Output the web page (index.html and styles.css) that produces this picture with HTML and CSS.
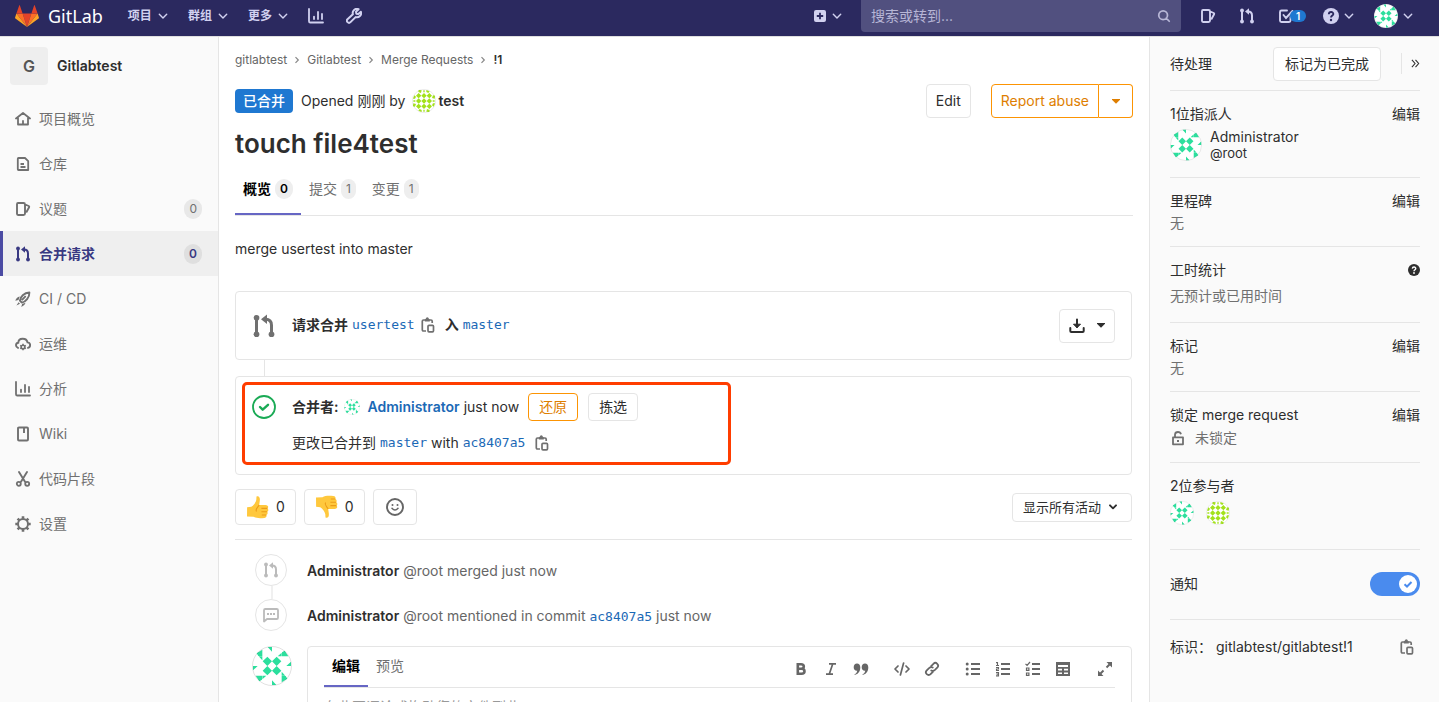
FILE: index.html
```html
<!DOCTYPE html>
<html lang="zh-CN">
<head>
<meta charset="utf-8">
<meta name="viewport" content="width=device-width, initial-scale=1">
<title>touch file4test (!1) · Merge Requests · Gitlabtest · GitLab</title>
<link rel="stylesheet" href="styles.css">
</head>
<body>
<svg class="sprite" aria-hidden="true">
  <symbol id="chevron" viewBox="0 0 10 10"><path d="M1.300 3.200L5 7l3.700-3.800" fill="none" stroke="currentColor" stroke-width="1.400" stroke-linecap="round" stroke-linejoin="round"/></symbol>
  <symbol id="chevron-bold" viewBox="0 0 8 8"><path d="M1 2.300l3 3 3-3" fill="none" stroke="currentColor" stroke-width="1.900" stroke-linecap="round" stroke-linejoin="round"/></symbol>
  <symbol id="angle" viewBox="0 0 8 8"><path d="M2.500 1.200L5.300 4 2.500 6.800" fill="none" stroke="currentColor" stroke-width="1.200"/></symbol>
  <symbol id="caret" viewBox="0 0 8 5"><path d="M0 0h8v.8L4 4.800 0 .8z" fill="currentColor"/></symbol>
  <symbol id="chart" viewBox="0 0 16 16"><path d="M1 1v12.200q0 1.300 1.300 1.300H15M6 11V8.600M10 11V4M14 11V6" fill="none" stroke="currentColor" stroke-width="1.800" stroke-linecap="round"/></symbol>
  <symbol id="wrench" viewBox="0 0 16 16"><path d="M12.600 1.200A4.200 4.200 0 0 0 6.900 6.300L1.500 11.200a1.900 1.900 0 0 0 3 2.900L9.600 9.100a4.200 4.200 0 0 0 5.300-5.300l-2.600 2.300-2-.4-.3-2z" fill="none" stroke="currentColor" stroke-width="2" stroke-linejoin="round"/></symbol>
  <symbol id="plus" viewBox="0 0 12 12"><path fill="currentColor" fill-rule="evenodd" d="M2 0h8q2 0 2 2v8q0 2-2 2H2q-2 0-2-2V2q0-2 2-2zm3.100 2.800v2.300H2.800v1.800h2.300v2.300h1.800V6.900h2.300V5.100H6.900V2.800z"/></symbol>
  <symbol id="search" viewBox="0 0 16 16"><path d="M10.500 10.500L14 14M12 7A5 5 0 1 1 2 7a5 5 0 0 1 10 0z" fill="none" stroke="currentColor" stroke-width="2" stroke-linecap="round"/></symbol>
  <symbol id="issues" viewBox="0 0 16 16"><path d="M3 2h5.500q1.500 0 1.500 1.500v9q0 1.500-1.500 1.500H3q-1 0-1-1.200V3.200Q2 2 3 2zM10.300 3.500l3.400 1.500q.8.500.4 1.300L11.200 11.500" fill="none" stroke="currentColor" stroke-width="1.900" stroke-linejoin="round"/></symbol>
  <symbol id="merge" viewBox="0 0 16 16"><path d="M3 3v10M13 13V7.500C13 5 11.500 3.500 9 3.500" fill="none" stroke="currentColor" stroke-width="2"/><g fill="currentColor"><circle cx="3" cy="2.500" r="1.900"/><circle cx="3" cy="13.500" r="1.900"/><circle cx="13" cy="13.500" r="1.900"/><path d="M10 .3v6.400L6 3.500z"/></g></symbol>
  <symbol id="todo" viewBox="0 0 16 16"><path d="M9 2.500H3.500Q2 2.500 2 4v8.500Q2 14 3.500 14H11q1.500 0 1.500-1.500V9M5.500 7l2.500 3 6.500-7" fill="none" stroke="currentColor" stroke-width="1.900" stroke-linecap="round"/></symbol>
  <symbol id="help" viewBox="0 0 16 16"><circle cx="8" cy="8" r="8" fill="currentColor"/><path class="help-mark" d="M5.800 6.200C6 3.200 10.500 3.400 10.300 6.200 10.200 7.500 8 7.800 8 9.500" fill="none" stroke-width="1.900"/><circle class="help-dot" cx="8" cy="12" r="1.200"/></symbol>
  <symbol id="home" viewBox="0 0 16 16"><path d="M1 7.500L8 2l7 5.500M3 7v6.500h10V7M8 10v3" fill="none" stroke="currentColor" stroke-width="1.800" stroke-linecap="round" stroke-linejoin="round"/></symbol>
  <symbol id="doc" viewBox="0 0 16 16"><path d="M3.500 2H10l3.200 3.200V14H3.500q-.7 0-.7-.8V2.800q0-.8.700-.8zM5.500 8H9M5.500 11h5" fill="none" stroke="currentColor" stroke-width="1.800" stroke-linejoin="round"/></symbol>
  <symbol id="rocket" viewBox="0 0 16 16"><path d="M6 10.800L4.900 9.700C5.300 6 9 1.700 14.400 1.500 14.600 6.400 10.600 11 6.900 11.600zM7.300 8.600l2.900-2.900" fill="none" stroke="currentColor" stroke-width="1.900" stroke-linejoin="round" stroke-linecap="round"/><path d="M.3 9.800Q1.200 6.300 4.800 5.500L3.500 9zM6.300 16q3.300-1 4.300-4.300l-3.500 1.200zM3.600 11.200l1.400 1.500-3.600 1.700z" fill="currentColor"/></symbol>
  <symbol id="cloud" viewBox="0 0 16 16"><path d="M3 11.900C.3 10.900.3 7.100 3.300 6.700 3.500 1.500 11.500 1.300 12.500 6.400c3.500.2 3.400 4.700.5 5.500" fill="none" stroke="currentColor" stroke-width="1.900" stroke-linecap="round"/><circle cx="8" cy="11" r="1.800" fill="none" stroke="currentColor" stroke-width="1.500"/><path d="M8 7.700v1.500M8 12.800v1.500M5.200 9.300l1.200.8M9.600 11.900l1.200.8M5.200 12.700l1.200-.8M9.600 10.100l1.200-.8" stroke="currentColor" stroke-width="1.500"/></symbol>
  <symbol id="book" viewBox="0 0 16 16"><path d="M4 1.500h8q1 0 1 1v11q0 1-1 1H4q-1 0-1-1v-11q0-1 1-1zM9 2v5" fill="none" stroke="currentColor" stroke-width="1.900"/></symbol>
  <symbol id="scissors" viewBox="0 0 16 16"><path d="M4 1l6 9.700M12 1L6 10.700" stroke="currentColor" stroke-width="1.900" stroke-linecap="round"/><g fill="none" stroke="currentColor" stroke-width="1.800"><circle cx="3.800" cy="12.800" r="2"/><circle cx="12.200" cy="12.800" r="2"/></g></symbol>
  <symbol id="gear" viewBox="0 0 16 16"><circle cx="8" cy="8" r="5" fill="none" stroke="currentColor" stroke-width="2"/><path d="M8 .3v2.500M8 13.200v2.500M.3 8h2.500M13.200 8h2.500M2.600 2.600l1.800 1.800M11.600 11.600l1.800 1.800M2.600 13.400l1.800-1.800M11.600 4.400l1.800-1.800" stroke="currentColor" stroke-width="2.600"/></symbol>
  <symbol id="copy" viewBox="0 0 16 16"><path d="M6 14H3.500Q2.300 14 2.300 12.800V4.200Q2.300 3 3.500 3H11q1.200 0 1.200 1.200V6" fill="none" stroke="currentColor" stroke-width="1.700"/><path d="M4.800 4.500V2.800Q4.800 2 5.600 2 6 .3 7.300.3T9 2q.8 0 .8.800v1.700z" fill="currentColor"/><rect x="8" y="8.300" width="5.500" height="6.500" rx="1" fill="none" stroke="currentColor" stroke-width="1.700"/></symbol>
  <symbol id="download" viewBox="0 0 16 16"><path d="M1.300 10v3q0 1 1 1h11.400q1 0 1-1v-3M8 1.500V9" fill="none" stroke="currentColor" stroke-width="2" stroke-linecap="round"/><path d="M4.500 6.200L8 9.800l3.500-3.600z" fill="currentColor" stroke="currentColor" stroke-width="1" stroke-linejoin="round"/></symbol>
  <symbol id="merged" viewBox="0 0 24 24"><circle cx="12" cy="12" r="11" fill="none" stroke="currentColor" stroke-width="1.800"/><path d="M8 12l2.700 2.700L16 9.800" fill="none" stroke="currentColor" stroke-width="2.400" stroke-linecap="round" stroke-linejoin="round"/></symbol>
  <symbol id="smile" viewBox="0 0 18 18"><circle cx="9" cy="9" r="8" fill="none" stroke="currentColor" stroke-width="1.900"/><circle cx="6.500" cy="7" r="1" fill="currentColor"/><circle cx="11.500" cy="7" r="1" fill="currentColor"/><path d="M6 10.300q3 3.600 6 0" fill="none" stroke="currentColor" stroke-width="1.500" stroke-linecap="round"/></symbol>
  <symbol id="comment" viewBox="0 0 16 16"><path d="M1 14.500V3.300Q1 2 2.300 2h11.400Q15 2 15 3.300v7.400q0 1.300-1.300 1.300H4z" fill="none" stroke="currentColor" stroke-width="1.800" stroke-linejoin="round"/><path d="M4 6h2v2H4zM7 6h2v2H7zM10 6h2v2h-2z" fill="currentColor"/></symbol>
  <symbol id="bold" viewBox="0 0 16 16"><path fill="none" stroke="currentColor" stroke-width="2.600" d="M4.800 3.300H8q2.800 0 2.800 2.200T8 7.700H4.800zM4.800 7.700h3.700q3 0 3 2.500t-3 2.500H4.800z"/></symbol>
  <symbol id="italic" viewBox="0 0 16 16"><path fill="none" stroke="currentColor" stroke-width="1.700" d="M6 2.800h7M3 13.200h7M9.700 3L6.300 13"/></symbol>
  <symbol id="quote" viewBox="0 0 16 16"><path fill="currentColor" d="M1 14q3-1.500 3.300-4.300C2 9.900.7 8.500.7 6.300.7 4 2 2.500 4 2.500S7.300 4 7.300 6.500C7.300 11 4.500 13.600 1 14zM9 14q3-1.500 3.300-4.300C10 9.900 8.700 8.500 8.700 6.300c0-2.300 1.300-3.800 3.300-3.800s3.300 1.500 3.300 4C15.300 11 12.500 13.600 9 14z"/></symbol>
  <symbol id="code" viewBox="0 0 16 16"><path fill="none" stroke="currentColor" stroke-width="1.700" stroke-linecap="round" stroke-linejoin="round" d="M4 5L1 8l3 3M12 5l3 3-3 3M9.600 2L6.400 14"/></symbol>
  <symbol id="link" viewBox="0 0 16 16"><g transform="rotate(-45 8 8)" fill="none" stroke="currentColor" stroke-width="1.800" stroke-linecap="round"><path d="M6.500 10.700H3.300a2.700 2.700 0 0 1 0-5.400h3.200q2.500.2 3 2.200"/><path d="M9.500 5.300h3.200a2.700 2.700 0 0 1 0 5.400H9.500q-2.500-.2-3-2.200"/></g></symbol>
  <symbol id="ul" viewBox="0 0 16 16"><path stroke="currentColor" stroke-width="1.900" d="M6 3h9M6 8h9M6 13h9"/><g fill="currentColor"><circle cx="2.200" cy="3" r="1.500"/><circle cx="2.200" cy="8" r="1.500"/><circle cx="2.200" cy="13" r="1.500"/></g></symbol>
  <symbol id="ol" viewBox="0 0 16 16"><path stroke="currentColor" stroke-width="1.900" d="M6 3h9M6 8h9M6 13h9"/><path fill="none" stroke="currentColor" stroke-width="1.100" d="M1 1.600h1.500v2.800M1 4.500h3M1 6.500h2.500V8H1.500v1.500H4M1 11.600h2.500v3.300H1M1.500 13.200h2"/></symbol>
  <symbol id="tasks" viewBox="0 0 16 16"><path stroke="currentColor" stroke-width="1.900" d="M7 3h8M7 8h8M7 13h8"/><path fill="none" stroke="currentColor" stroke-width="1.200" d="M.5 2.800l1.600 1.600L5 1M1.500 7h2.400v2.400H1.500zM1.500 12h2.400v2.400H1.500z"/></symbol>
  <symbol id="table" viewBox="0 0 16 16"><path fill="currentColor" fill-rule="evenodd" d="M1 1h14v14H1zM3 4v2h10V4zM3 7.800v1.700h4V7.800zm6 0v1.700h4V7.800zM3 11.500V13h4v-1.500zm6 0V13h4v-1.500z"/></symbol>
  <symbol id="expand" viewBox="0 0 16 16"><path d="M9.500 6.500l3-3M6.500 9.500l-3 3" stroke="currentColor" stroke-width="1.900"/><path fill="currentColor" d="M9.500 1H15v5.500zM1 9.500V15h5.500z"/></symbol>
  <symbol id="lock" viewBox="0 0 16 16"><path d="M3 7.300h10v7H3zM5 7V4.500q.3-2.500 3-2.500 2 0 2.800 1.500" fill="none" stroke="currentColor" stroke-width="1.800" stroke-linecap="round" stroke-linejoin="round"/><rect x="7" y="10" width="2" height="2" fill="currentColor"/></symbol>
  <symbol id="thumb-up" viewBox="0 0 24 24"><path fill="#ffc83d" d="M10.500 1.500c2.400-.9 3.700 1 3.300 4.200l-.6 4.300h6.300c3 0 3.300 2.600 1.900 3.400 1.500 1 1.100 3-.3 3.400 1.100 1 .5 2.900-.8 3.200.7 1.600-.3 2.800-2 2.900-4.200.4-8.100.4-10.800-1.100L1 21.400l.1-9.200 4.200-.5c2.600-1.600 4.600-4.500 5-7z"/><path fill="none" stroke="#ec9c18" stroke-width="1.100" d="M21.400 13.400h-6M21.100 16.800h-5.700M20.300 20h-4.500M13.200 10l-1.700 2.400q-2 2.200-1 4"/></symbol>
  <symbol id="avatar-admin" viewBox="0 0 120 120"><circle cx="60" cy="60" r="60" fill="#fff"/><g fill="#2bdf9d"><path d="M46 32l14 14-14 14-14-14zM74 32l14 14-14 14-14-14zM46 60l14 14-14 14-14-14zM74 60l14 14-14 14-14-14z"/><g id="pinwheel"><path d="M47 3h13v14zM77 31l12-11v11zM90 31V19l8-5 11 17z"/></g><use href="#pinwheel" transform="rotate(90 60 60)"/><use href="#pinwheel" transform="rotate(180 60 60)"/><use href="#pinwheel" transform="rotate(270 60 60)"/></g><circle cx="60" cy="60" r="58.500" fill="none" stroke="#000" stroke-opacity=".12" stroke-width="3"/></symbol>
  <symbol id="avatar-test" viewBox="0 0 72 72"><circle cx="36" cy="36" r="36" fill="#fff"/><g fill="#a3e21b"><path d="M36 28l8 8-8 8-8-8z"/><g id="blocks"><path d="M36 12l8 8-8 8-8-8zM52 12l8 8-8 8-8-8zM20 3l9 1-2 8-8-3zM43 3l10 4-4 5-6-3zM34 4h4v6h-4z"/></g><use href="#blocks" transform="rotate(90 36 36)"/><use href="#blocks" transform="rotate(180 36 36)"/><use href="#blocks" transform="rotate(270 36 36)"/></g><circle cx="36" cy="36" r="35" fill="none" stroke="#000" stroke-opacity=".12" stroke-width="2"/></symbol>
</svg>

<header class="navbar">
  <a class="brand" href="#">
    <svg class="brand-logo" viewBox="0 0 24 22"><path fill="#e24329" d="M12 22L7.600 8.500h8.800z"/><path fill="#fc6d26" d="M12 22L7.600 8.500H1.400zM12 22l4.400-13.500h6.200z"/><path fill="#fca326" d="M1.400 8.500L.1 12.600q-.2.600.3 1L12 22zM22.600 8.500l1.300 4.100q.2.600-.3 1L12 22z"/><path fill="#e24329" d="M1.400 8.500h6.200L4.900.4q-.3-.7-.7 0zM22.600 8.500h-6.200L19.100.4q.3-.7.700 0z"/></svg>
    <span class="brand-name">GitLab</span>
  </a>
  <nav class="top-nav" aria-label="主导航">
    <button class="top-link">项目<svg class="chev"><use href="#chevron"/></svg></button>
    <button class="top-link">群组<svg class="chev"><use href="#chevron"/></svg></button>
    <button class="top-link">更多<svg class="chev"><use href="#chevron"/></svg></button>
    <a class="top-icon" href="#" aria-label="分析"><svg class="icon"><use href="#chart"/></svg></a>
    <a class="top-icon" href="#" aria-label="管理"><svg class="icon"><use href="#wrench"/></svg></a>
  </nav>
  <div class="top-right">
    <button class="top-new" aria-label="新建"><svg class="icon-sm"><use href="#plus"/></svg><svg class="chev"><use href="#chevron"/></svg></button>
    <label class="search"><input class="search-input" type="text" placeholder="搜索或转到..." aria-label="搜索或转到"><svg class="search-icon"><use href="#search"/></svg></label>
    <a class="top-item" href="#" aria-label="议题"><svg class="icon"><use href="#issues"/></svg></a>
    <a class="top-item" href="#" aria-label="合并请求"><svg class="icon"><use href="#merge"/></svg></a>
    <a class="top-item todos" href="#" aria-label="待办事项"><svg class="icon"><use href="#todo"/></svg><span class="todo-count">1</span></a>
    <button class="top-item" aria-label="帮助"><svg class="icon help-top"><use href="#help"/></svg><svg class="chev"><use href="#chevron"/></svg></button>
    <button class="top-item" aria-label="用户"><svg class="avatar-24"><use href="#avatar-admin"/></svg><svg class="chev"><use href="#chevron"/></svg></button>
  </div>
</header>

<div class="layout">
  <aside class="sidebar">
    <a class="project" href="#"><span class="project-avatar">G</span><span class="project-name">Gitlabtest</span></a>
    <nav class="side-nav" aria-label="项目导航">
      <a class="side-link" href="#"><svg class="icon"><use href="#home"/></svg><span>项目概览</span></a>
      <a class="side-link" href="#"><svg class="icon"><use href="#doc"/></svg><span>仓库</span></a>
      <a class="side-link" href="#"><svg class="icon"><use href="#issues"/></svg><span>议题</span><span class="count side-count">0</span></a>
      <a class="side-link active" href="#"><svg class="icon"><use href="#merge"/></svg><span>合并请求</span><span class="count side-count">0</span></a>
      <a class="side-link" href="#"><svg class="icon"><use href="#rocket"/></svg><span>CI / CD</span></a>
      <a class="side-link" href="#"><svg class="icon"><use href="#cloud"/></svg><span>运维</span></a>
      <a class="side-link" href="#"><svg class="icon"><use href="#chart"/></svg><span>分析</span></a>
      <a class="side-link" href="#"><svg class="icon"><use href="#book"/></svg><span>Wiki</span></a>
      <a class="side-link" href="#"><svg class="icon"><use href="#scissors"/></svg><span>代码片段</span></a>
      <a class="side-link" href="#"><svg class="icon"><use href="#gear"/></svg><span>设置</span></a>
    </nav>
  </aside>

  <main class="content">
    <nav class="breadcrumbs" aria-label="面包屑">
      <a href="#">gitlabtest</a><svg class="sep"><use href="#angle"/></svg><a href="#">Gitlabtest</a><svg class="sep"><use href="#angle"/></svg><a href="#">Merge Requests</a><svg class="sep"><use href="#angle"/></svg><a class="current" href="#">!1</a>
    </nav>
    <div class="detail-header">
      <span class="status">已合并</span>
      <span class="opened">Opened 刚刚 by</span>
      <a class="author" href="#"><svg class="avatar-24"><use href="#avatar-test"/></svg>test</a>
      <div class="header-actions">
        <button class="btn">Edit</button>
        <div class="btn-group"><button class="btn warn">Report abuse</button><button class="btn warn toggle" aria-label="更多操作"><svg class="caret"><use href="#caret"/></svg></button></div>
      </div>
    </div>
    <h1 class="title">touch file4test</h1>
    <nav class="tabs" aria-label="合并请求标签">
      <a class="tab active" href="#">概览<span class="count">0</span></a>
      <a class="tab" href="#">提交<span class="count">1</span></a>
      <a class="tab" href="#">变更<span class="count">1</span></a>
    </nav>
    <p class="description">merge usertest into master</p>

    <section class="widget source">
      <svg class="widget-icon"><use href="#merge"/></svg>
      <p class="widget-line"><strong>请求合并</strong><a class="ref" href="#">usertest</a><button class="copy" aria-label="复制分支名"><svg class="icon"><use href="#copy"/></svg></button><strong>入</strong><a class="ref" href="#">master</a></p>
      <button class="btn download" aria-label="下载"><svg class="icon"><use href="#download"/></svg><svg class="caret"><use href="#caret"/></svg></button>
    </section>
    <div class="connector"></div>
    <section class="widget result">
      <div class="highlight"></div>
      <svg class="widget-icon success"><use href="#merged"/></svg>
      <div class="result-body">
        <div class="merged-by"><strong>合并者:</strong><svg class="avatar-16"><use href="#avatar-admin"/></svg><a class="person" href="#">Administrator</a><span>just now</span><button class="btn small warn revert">还原</button><button class="btn small">拣选</button></div>
        <p class="widget-line"><span>更改已合并到</span><a class="ref" href="#">master</a><span>with</span><a class="ref" href="#">ac8407a5</a><button class="copy" aria-label="复制提交"><svg class="icon"><use href="#copy"/></svg></button></p>
      </div>
    </section>

    <div class="awards">
      <button class="btn award"><svg class="emoji"><use href="#thumb-up"/></svg>0</button>
      <button class="btn award"><svg class="emoji down"><use href="#thumb-up"/></svg>0</button>
      <button class="btn award add" aria-label="添加表情"><svg class="smile"><use href="#smile"/></svg></button>
      <button class="btn filter">显示所有活动<svg class="chev-bold"><use href="#chevron-bold"/></svg></button>
    </div>

    <ul class="notes">
      <li class="note"><span class="note-icon"><svg class="icon"><use href="#merge"/></svg></span><p><a class="note-author" href="#">Administrator</a> @root merged just now</p></li>
      <li class="note"><span class="note-icon"><svg class="icon"><use href="#comment"/></svg></span><p><a class="note-author" href="#">Administrator</a> @root mentioned in commit <a class="ref" href="#">ac8407a5</a> just now</p></li>
    </ul>

    <form class="comment">
      <svg class="avatar-40"><use href="#avatar-admin"/></svg>
      <div class="editor">
        <div class="editor-bar">
          <button type="button" class="editor-tab active">编辑</button><button type="button" class="editor-tab">预览</button>
          <div class="tools">
            <button type="button" aria-label="粗体"><svg class="icon"><use href="#bold"/></svg></button>
            <button type="button" aria-label="斜体"><svg class="icon"><use href="#italic"/></svg></button>
            <button type="button" aria-label="引用"><svg class="icon"><use href="#quote"/></svg></button>
            <button type="button" class="group" aria-label="代码"><svg class="icon"><use href="#code"/></svg></button>
            <button type="button" aria-label="链接"><svg class="icon"><use href="#link"/></svg></button>
            <button type="button" class="group" aria-label="无序列表"><svg class="icon"><use href="#ul"/></svg></button>
            <button type="button" aria-label="有序列表"><svg class="icon"><use href="#ol"/></svg></button>
            <button type="button" aria-label="任务列表"><svg class="icon"><use href="#tasks"/></svg></button>
            <button type="button" aria-label="表格"><svg class="icon"><use href="#table"/></svg></button>
            <button type="button" class="group" aria-label="全屏"><svg class="icon"><use href="#expand"/></svg></button>
          </div>
        </div>
        <textarea class="editor-text" aria-label="评论" placeholder="在此写评论或拖动您的文件到此"></textarea>
      </div>
    </form>
  </main>

  <aside class="details">
    <div class="block todo-block"><span>待处理</span><button class="btn mark">标记为已完成</button><button class="collapse" aria-label="收起侧边栏"><svg viewBox="0 0 10 10"><path d="M1 1l3.500 4L1 9M5 1l3.500 4L5 9" fill="none" stroke="currentColor" stroke-width="1.200"/></svg></button></div>
    <div class="block assignee"><div class="row"><span>1位指派人</span><a href="#">编辑</a></div>
      <a class="user" href="#"><svg class="avatar-32"><use href="#avatar-admin"/></svg><span class="user-text"><span>Administrator</span><span class="handle">@root</span></span></a></div>
    <div class="block"><div class="row"><span>里程碑</span><a href="#">编辑</a></div><div class="value">无</div></div>
    <div class="block time"><div class="row"><span>工时统计</span><button class="help-btn" aria-label="帮助"><svg class="icon-sm"><use href="#help"/></svg></button></div><div class="value">无预计或已用时间</div></div>
    <div class="block"><div class="row"><span>标记</span><a href="#">编辑</a></div><div class="value">无</div></div>
    <div class="block"><div class="row"><span>锁定 merge request</span><a href="#">编辑</a></div><div class="value lock-value"><svg class="icon"><use href="#lock"/></svg>未锁定</div></div>
    <div class="block people"><div class="row"><span>2位参与者</span></div><div class="avatars"><svg class="avatar-24"><use href="#avatar-admin"/></svg><svg class="avatar-24"><use href="#avatar-test"/></svg></div></div>
    <div class="block notify"><label for="notifications">通知</label><span class="switch"><input id="notifications" class="switch-input" type="checkbox" checked><svg class="switch-check" viewBox="0 0 10 10"><path d="M1.500 5.200L4 7.500l4.500-4.500" fill="none" stroke="currentColor" stroke-width="2"/></svg></span></div>
    <div class="block reference"><span>标识：</span><span>gitlabtest/gitlabtest!1</span><button class="copy" aria-label="复制标识"><svg class="icon"><use href="#copy"/></svg></button></div>
  </aside>
</div>
</body>
</html>
```
FILE: styles.css
```css
:root {
  --text: #2e2e2e;
  --muted: #707070;
  --border: #e5e5e5;
  --panel: #fafafa;
  --link: #1b69b6;
  --orange: #fc9403;
  --orange-text: #de7e00;
  --nav: #2b295f;
  --nav-text: #d1d1f0;
}

* { box-sizing: border-box; }

body {
  margin: 0;
  height: 100vh;
  overflow: hidden;
  display: flex;
  flex-direction: column;
  color: var(--text);
  background: #fff;
  font: 14px/22px Inter, "Noto Sans CJK SC", sans-serif;
}

button, input, textarea { font: inherit; color: inherit; }
button { padding: 0; border: 0; background: none; cursor: pointer; }
a { color: inherit; text-decoration: none; }
p { margin: 0; }
strong { font-weight: 600; }

.sprite { position: absolute; width: 0; height: 0; }
svg { flex: none; display: block; }
.icon { width: 16px; height: 16px; }
.icon-sm { width: 12px; height: 12px; }
.chev { width: 10px; height: 10px; }
.chev-bold { width: 8px; height: 8px; }
.caret { width: 8px; height: 5px; }
.avatar-16 { width: 16px; height: 16px; }
.avatar-24 { width: 24px; height: 24px; }
.avatar-32 { width: 32px; height: 32px; }
.avatar-40 { width: 40px; height: 40px; }
.help-mark { stroke: var(--help-mark, #fff); }
.help-dot { fill: var(--help-mark, #fff); }

/* Top bar */
.navbar {
  flex: none;
  display: flex;
  align-items: center;
  justify-content: space-between;
  height: 37px;
  padding: 0 26px 4px 15px;
  background: var(--nav);
  border-bottom: 1px solid #dfdfdf;
  color: var(--nav-text);
}
.brand { display: flex; align-items: center; gap: 9px; color: #fff; }
.brand-logo { width: 24px; height: 22px; }
.brand-name { font: 18px/24px "Noto Sans", sans-serif; }
.top-nav { display: flex; align-items: center; margin-left: 25px; margin-right: auto; }
.top-link { display: flex; align-items: center; gap: 6px; margin-right: 20px; font-size: 12px; font-weight: 600; }
.top-icon { margin-right: 22px; }
.top-right { display: flex; align-items: center; }
.top-new { display: flex; align-items: center; gap: 6px; margin-right: 19px; }
.search {
  display: flex;
  align-items: center;
  width: 320px;
  height: 32px;
  padding: 0 10px;
  margin-right: 19px;
  background: #51507f;
  border-radius: 0 0 4px 4px;
}
.search-input { flex: 1; min-width: 0; padding: 0; border: 0; outline: 0; background: none; }
.search-input::placeholder { color: #b7b6d6; opacity: 1; }
.search-icon { width: 14px; height: 14px; color: #b7b6d6; }
.top-item { display: flex; align-items: center; gap: 5px; margin-right: 23px; }
.top-item:last-child { margin-right: 0; }
.todos { margin-right: 17px; gap: 0; }
.todos + .top-item { margin-right: 20px; }
.todo-count {
  width: 16px;
  margin-left: -4px;
  border-radius: 8px;
  background: #1f78d1;
  color: #fff;
  font-size: 10px;
  font-weight: 600;
  line-height: 12px;
  text-align: center;
}
.help-top { --help-mark: var(--nav); }

.layout { flex: 1; min-height: 0; display: grid; grid-template-columns: 219px minmax(0, 1fr) 290px; }

/* Left navigation */
.sidebar { background: var(--panel); border-right: 1px solid var(--border); }
.project { display: flex; align-items: center; gap: 9px; height: 58px; margin-bottom: 1px; padding-left: 10px; }
.project-avatar {
  width: 38px;
  border-radius: 4px;
  background: #eee;
  color: #555;
  font-size: 16px;
  font-weight: 600;
  line-height: 38px;
  text-align: center;
}
.project-name { font-weight: 600; }
.side-link { display: flex; align-items: center; gap: 8px; height: 45px; padding: 0 16px 0 15px; color: var(--muted); }
.side-link.active { padding-left: 12px; border-left: 3px solid #4b4ba3; background: #efefef; color: #393982; font-weight: 600; }
.count { padding: 0 5px; border-radius: 10px; background: #eee; font-size: 12px; line-height: 20px; }
.side-count { margin-left: auto; background: #e8e8e8; }
.active .side-count { background: #dfdfdf; }

/* Merge request */
.content { padding: 0 16px; }
.breadcrumbs { display: flex; align-items: center; height: 45px; margin-bottom: 2px; gap: 6px; font-size: 12px; color: #666; }
.sep { width: 8px; height: 8px; color: #888; }
.breadcrumbs .current { color: var(--text); font-weight: 600; }
.detail-header { display: flex; align-items: center; gap: 8px; height: 34px; }
.status { padding: 0 8px; border-radius: 4px; background: #1f78d1; color: #fff; line-height: 24px; font-weight: 500; }
.author { display: flex; align-items: center; gap: 3px; margin-left: -2px; font-weight: 600; }
.header-actions { display: flex; gap: 20px; margin-left: auto; }
.btn {
  display: flex;
  align-items: center;
  justify-content: center;
  height: 34px;
  padding: 0 10px;
  border: 1px solid var(--border);
  border-radius: 4px;
  background: #fff;
}
.btn.warn { border-color: var(--orange); color: var(--orange-text); }
.header-actions .btn { padding: 0 9px; }
.btn-group { display: flex; }
.btn-group .btn:first-child { border-radius: 4px 0 0 4px; }
.btn-group .toggle { width: 34px; border-left: 0; border-radius: 0 4px 4px 0; }
.title { margin: 8px 0 2px; font-size: 26px; line-height: 36px; font-weight: 600; }
.tabs { display: flex; height: 52px; border-bottom: 1px solid var(--border); color: var(--muted); }
.tab { display: flex; align-items: center; gap: 4px; height: 51px; padding: 0 8px; border-bottom: 2px solid transparent; }
.tab.active { border-color: #6666c4; color: #000; font-weight: 600; }
.description { padding: 22px 0 31px; }

.widget { position: relative; display: flex; margin-right: 1px; border: 1px solid var(--border); border-radius: 4px; }
.source { align-items: center; height: 69px; padding: 0 16px; }
.result { height: 99px; padding: 16px; }
.widget-icon { width: 24px; height: 24px; margin-right: 16px; color: var(--muted); }
.success { margin-top: 2px; color: #1aaa55; }
.widget-line, .merged-by { display: flex; align-items: center; gap: 4px; }
.ref { color: var(--link); font-family: "DejaVu Sans Mono", monospace; font-size: 13px; }
.copy { color: var(--muted); }
.widget-line .copy { margin-left: 5px; }
.source .widget-line { padding-bottom: 1px; }
.source .copy { margin: 0 5px 0 1px; }
.download { width: 56px; gap: 12px; margin-left: auto; }
.connector { width: 1px; height: 16px; margin-left: 29px; background: var(--border); }
.result-body { display: flex; flex-direction: column; gap: 11px; }
.merged-by .avatar-16 { margin-left: 2px; }
.merged-by .person { margin-left: 3px; color: var(--link); font-weight: 600; }
.btn.small { height: 28px; }
.revert { margin: 0 6px 0 5px; }
.highlight { position: absolute; top: 5px; left: 6px; width: 489px; height: 83px; border: 3px solid #ff3d00; border-radius: 5px; pointer-events: none; }

.awards { display: flex; align-items: center; gap: 8px; margin-right: 1px; padding: 14px 0; border-bottom: 1px solid var(--border); }
.award { height: 36px; gap: 6px; }
.award.add { width: 44px; }
.emoji { width: 24px; height: 24px; }
.emoji.down { transform: rotate(180deg) scaleX(-1); }
.smile { width: 18px; height: 18px; color: #666; }
.filter { height: 29px; margin-left: auto; padding: 0 14px 0 10px; gap: 8px; font-size: 13px; }

.notes { list-style: none; margin: 0; padding: 14px 0 15px 20px; display: grid; gap: 13px; }
.note { position: relative; display: flex; align-items: center; gap: 20px; color: #666; }
.note p { padding-top: 2px; }
.note + .note::before { content: ""; position: absolute; left: 16px; bottom: 32px; width: 2px; height: 13px; background: #f0f0f0; }
.note-icon { display: grid; place-items: center; width: 32px; height: 32px; border: 1px solid var(--border); border-radius: 50%; color: #bbb; }
.note-author { color: var(--text); font-weight: 600; }

.comment { display: flex; gap: 15px; margin-right: 1px; padding-left: 17px; }
.editor { flex: 1; padding: 0 16px; border: 1px solid var(--border); border-radius: 4px; }
.editor-bar { display: flex; height: 41px; border-bottom: 1px solid var(--border); }
.editor-tab { height: 40px; padding: 0 8px; border-bottom: 2px solid transparent; color: var(--muted); }
.editor-tab.active { border-color: #6666c4; color: #000; font-weight: 600; }
.tools { display: flex; align-items: center; gap: 14px; margin-left: auto; padding: 4px 2px 0 0; color: #666; }
.tools .group { margin-left: 11px; }
.tools .group:last-child { margin-left: 12px; }
.editor-text { display: block; width: 100%; height: 100px; padding: 8px 0; border: 0; outline: 0; resize: none; }
.editor-text::placeholder { color: #999; opacity: 1; }

/* Right details */
.details { padding: 0 19px 0 20px; background: var(--panel); border-left: 1px solid var(--border); }
.block { padding: 12px 0; border-bottom: 1px solid var(--border); }
.row { display: flex; justify-content: space-between; align-items: center; }
.todo-block { display: flex; align-items: center; height: 54px; padding: 0; }
.mark { margin-left: auto; margin-right: 20px; padding: 0 11px; }
.collapse { width: 19px; height: 21px; border-left: 1px solid var(--border); padding-left: 9px; }
.assignee { padding-bottom: 16px; }
.user { display: flex; gap: 8px; height: 32px; margin-top: 4px; }
.user-text { display: flex; flex-direction: column; justify-content: center; line-height: 17px; }
.handle { font-size: 13px; }
.value { color: var(--muted); }
.time .value { padding: 4px 0 3px; }
.lock-value { display: flex; align-items: center; gap: 9px; height: 24px; }
.people { padding-bottom: 24px; }
.avatars { display: flex; gap: 12px; margin-top: 4px; }
.notify { display: flex; align-items: center; justify-content: space-between; height: 70px; padding: 10px 0 12px; }
.switch { position: relative; display: flex; }
.switch-input { appearance: none; width: 50px; height: 24px; margin: 0; border-radius: 12px; background: #4a8bee; cursor: pointer; }
.switch-input::before { content: ""; display: block; width: 18px; height: 18px; margin: 3px 3px 3px 29px; border-radius: 50%; background: #fff; }
.switch-check { position: absolute; top: 7px; right: 7px; width: 10px; height: 10px; color: #4a8bee; pointer-events: none; }
.reference { display: flex; gap: 4px; padding: 16px 0; border: 0; }
.reference .copy { margin-left: auto; margin-right: 5px; }
```
